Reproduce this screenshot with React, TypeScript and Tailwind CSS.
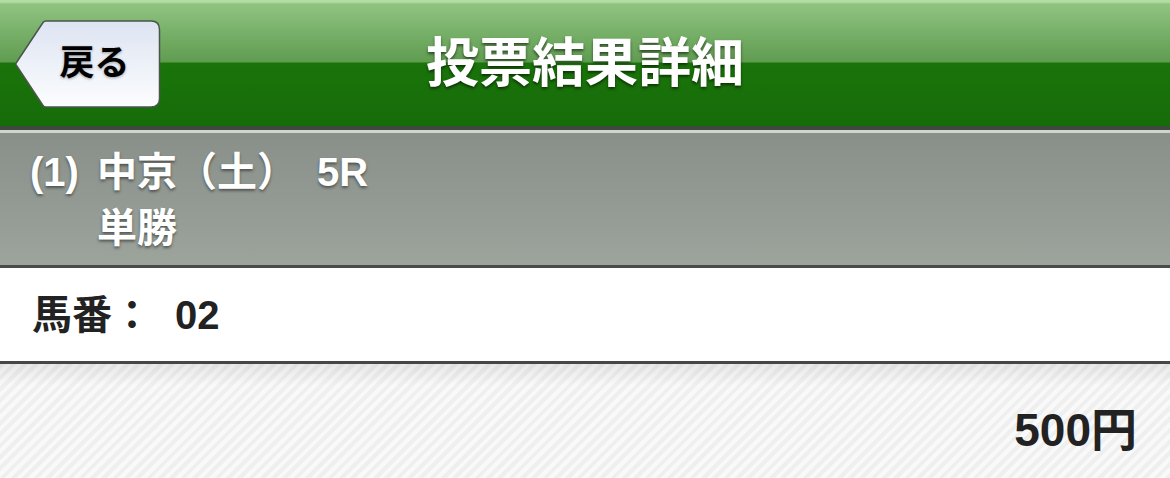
import React from "react";

const BackButton: React.FC = () => {
  return (
    <button className="relative flex h-[88px] w-[147px] items-center justify-center pl-[14px]">
      <svg
        className="absolute inset-0"
        width="147"
        height="88"
        viewBox="0 0 147 88"
      >
        <defs>
          <linearGradient id="backFill" x1="0" y1="0" x2="0" y2="1">
            <stop offset="0" stopColor="#dde4f2" />
            <stop offset="1" stopColor="#fcfdfe" />
          </linearGradient>
        </defs>
        <path
          d="M1.5 44 L29 2.5 Q30 1 32 1 H137 Q145.5 1 145.5 9.5 V78.5 Q145.5 87 137 87 H32 Q30 87 29 85.5 Z"
          fill="url(#backFill)"
          stroke="#4b554b"
          strokeWidth="1.5"
        />
      </svg>
      <span className="relative text-[35px] font-bold text-black [text-shadow:0_1px_3px_rgba(0,0,0,0.35)]">
        戻る
      </span>
    </button>
  );
};

export default function App() {
  return (
    <div className="w-[1170px] h-[478px] overflow-hidden bg-white font-['Liberation_Sans','Noto_Sans_CJK_JP',sans-serif]">
      {/* header */}
      <div className="grid h-[130px] grid-cols-[1fr_auto_1fr] items-center border-b-4 border-[#3e4a3e] [background-image:linear-gradient(to_bottom,#b2dea4_0,#b2dea4_2px,#8fc381_4px,#5f9c50_62px,#1a740a_63px,#176c0a_126px)]">
        <div className="pl-[14px] pt-[1px]">
          <BackButton />
        </div>
        <h1 className="text-[53px] font-bold leading-none text-white [text-shadow:0_2px_3px_rgba(0,0,0,0.55)]">
          投票結果詳細
        </h1>
        <div />
      </div>
      <div className="h-[3px] bg-[#cfd4cf]" />

      {/* race info */}
      <div className="flex h-[135px] gap-[18px] border-b-[3px] border-[#4a4c4a] pl-[30px] pt-[11px] text-[40px] font-bold leading-[56px] text-white [background-image:linear-gradient(to_bottom,#898f89,#9ca49c)] [text-shadow:0_2px_3px_rgba(0,0,0,0.45)]">
        <span>(1)</span>
        <div className="flex flex-col">
          <span>
            中京（土）<span className="ml-[20px]">5R</span>
          </span>
          <span>単勝</span>
        </div>
      </div>

      {/* horse number */}
      <div className="flex h-[96px] items-center border-b-[3px] border-[#464646] bg-white pl-[32px] text-[40px] font-bold text-[#222]">
        <span>馬番：</span>
        <span className="ml-[23px]">02</span>
      </div>

      {/* amount */}
      <div className="flex h-[114px] justify-end pr-[33px] pt-[40px] [background-image:linear-gradient(to_bottom,rgba(0,0,0,0.07),rgba(0,0,0,0)_22px),repeating-linear-gradient(135deg,#efefef_0,#efefef_4px,#f9f9f9_4px,#f9f9f9_8px)]">
        <span className="text-[46px] font-bold leading-[52px] text-[#222]">
          500円
        </span>
      </div>
    </div>
  );
}
